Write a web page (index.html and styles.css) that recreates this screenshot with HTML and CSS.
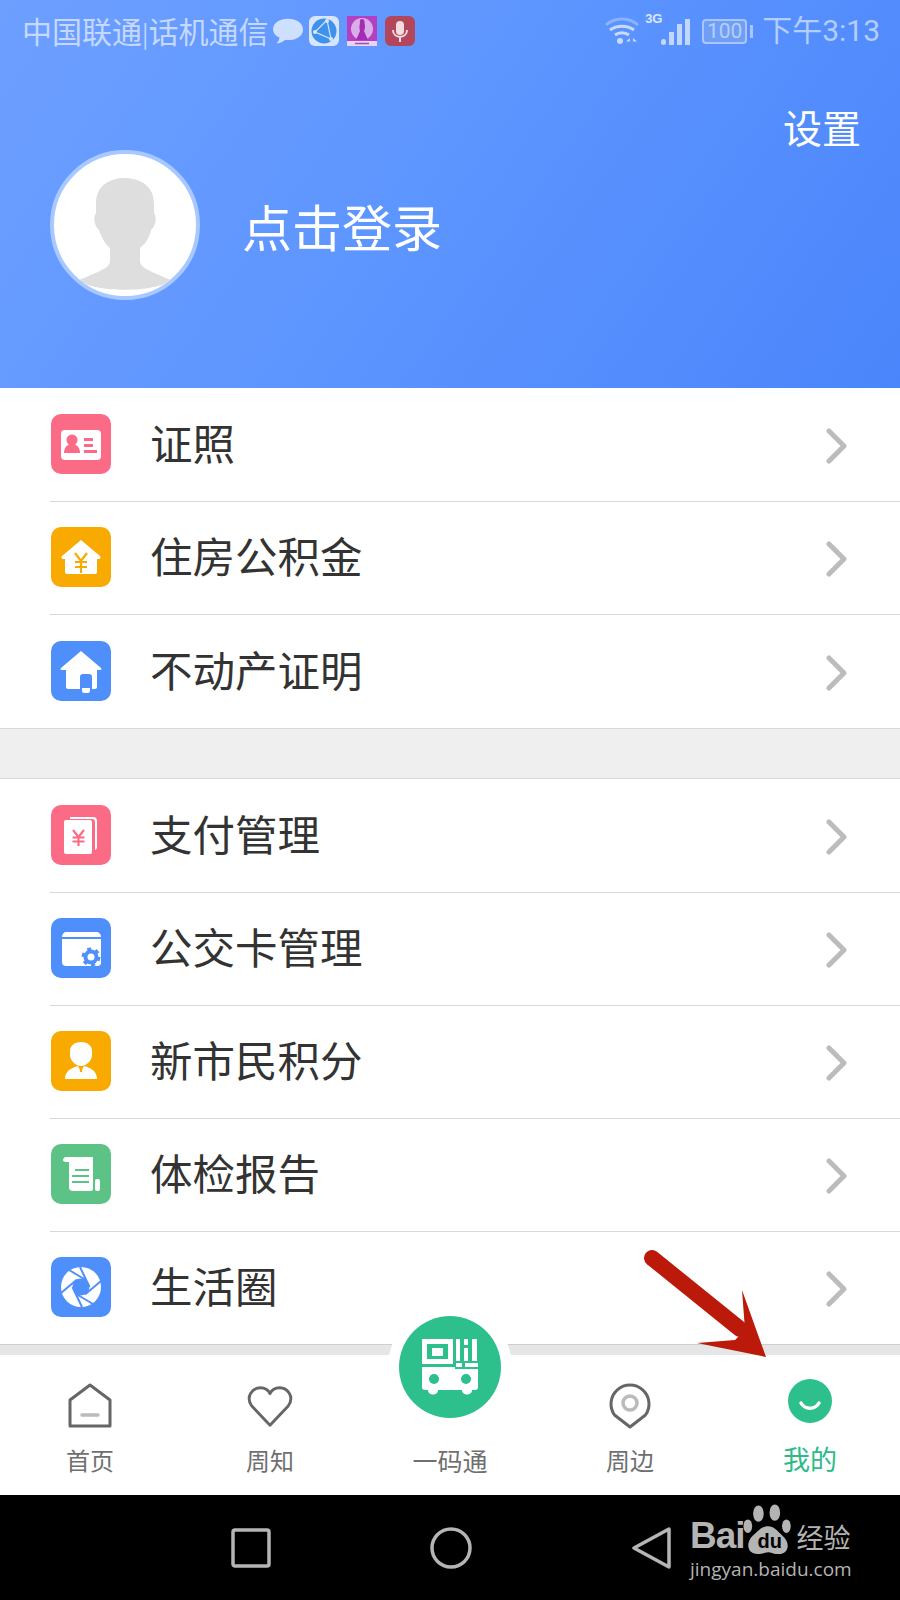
FILE: index.html
```html
<!DOCTYPE html>
<html lang="zh-CN">
<head>
  <meta charset="UTF-8" />
  <title>我的</title>
  <meta name="viewport" content="width=device-width, initial-scale=1" />
  <link rel="stylesheet" href="styles.css">
</head>
<body>
<div class="page">

  <header class="top">
    <div class="status">
      <div class="status-left">
        <span class="carrier">中国联通<i class="pipe">|</i>话机通信</span>
        <svg class="st-icon bubble" viewBox="1 3 28 25"><path d="M15 4c8 0 14 4 14 10s-6 10-14 10c-1 0-2 0-3-.2C10 26 7 27 4 27c2-1.500 3-3.500 3-5.500C3 19.800 1 17 1 14 1 8 7 4 15 4z"/></svg>
        <svg class="st-icon" viewBox="0 0 30 30"><rect width="30" height="30" rx="6" fill="#d7e5ff"/><circle cx="15" cy="15" r="12.500" fill="#3f92ea"/><path d="M18 4 6 16l16 7M18 4l4 19" fill="none" stroke="#d7e5ff" stroke-width="1.200"/><circle cx="6" cy="16" r="2" fill="#d7e5ff"/><circle cx="22" cy="23" r="2" fill="#d7e5ff"/><circle cx="18" cy="5" r="2" fill="#d7e5ff"/></svg>
        <svg class="st-icon" viewBox="0 0 30 30"><rect width="30" height="30" fill="#b43fc0"/><circle cx="15" cy="13" r="11" fill="#d9aee8"/><path d="M15 3c2 0 3 2 2.500 4 1 3 .5 6-.5 8l4 9H9l4-9c-1-3-.5-6 0-8-.5-2 0-4 2-4z" fill="#a52db5"/><rect y="25" width="30" height="5" fill="#e9d3ee"/><path d="M8 27.500h14" stroke="#a04fb0" stroke-width="1.500"/></svg>
        <svg class="st-icon" viewBox="0 0 30 30"><rect width="30" height="30" rx="6" fill="#b3455c"/><rect x="11" y="5" width="8" height="14" rx="4" fill="#f2dce0"/><path d="M8 14c0 9 14 9 14 0M15 20v6" fill="none" stroke="#f2dce0" stroke-width="2"/></svg>
      </div>
      <div class="status-right">
        <svg class="wifi" viewBox="0 0 34 28" fill="none" stroke="#c9dafc" stroke-width="3"><path d="M1 8c9-8 23-8 32 0" opacity=".45"/><path d="M5 13c7-5 17-5 24 0"/><path d="M10 18c4-3 10-3 14 0"/><circle cx="15" cy="24" r="3" fill="#c9dafc" stroke="none"/><path d="M25 21l-4 3.500h4zM28 21l4 3.500h-4z" fill="#c9dafc" stroke="none"/></svg>
        <div class="signal">
          <span class="net">3G</span>
          <svg viewBox="0 0 30 30" fill="#c3d6fb"><rect x="0" y="22" width="5" height="6" rx="2.500"/><rect x="8" y="15" width="5" height="13"/><rect x="16" y="7" width="5" height="21"/><rect x="24" y="2" width="5" height="26"/></svg>
        </div>
        <div class="battery">
          <div class="battery-box">100</div>
          <div class="battery-tip"></div>
        </div>
        <span class="time">下午3:13</span>
      </div>
    </div>
    <div class="settings">设置</div>
    <div class="profile">
      <div class="avatar">
        <svg viewBox="0 0 142 142"><path fill="#dedede" d="M71 24C56 24 42 31 42 50v9c-3 4-2 13 3 17 3 9 7 15 11 18v13c0 7-10 10-31 19 14 13 77 13 92 0-21-9-31-12-31-19V94c5-4 9-9 11-18 5-4 6-13 3-17v-9C100 36 92 25 71 24z"/></svg>
      </div>
      <div class="login">点击登录</div>
    </div>
  </header>

  <main class="list">
    <section class="group">
      <div class="row">
        <svg class="row-icon" viewBox="0 0 60 60"><rect width="60" height="60" rx="10" fill="#fb6b86"/><rect x="10" y="16" width="40" height="30" rx="4" fill="#fff"/><circle cx="21" cy="26" r="5.500" fill="#fb6b86"/><path d="M13 39c0-12 16-12 16 0z" fill="#fb6b86"/><path d="M33 24h9v3h-9zM33 30h9v3h-9zM33 36h13v3H33z" fill="#fb6b86"/></svg>
        <div class="row-body"><span class="row-label">证照</span><svg class="chev" viewBox="0 0 22 36"><path d="M3 3l15 15L3 33"/></svg></div>
      </div>
      <div class="row">
        <svg class="row-icon" viewBox="0 0 60 60"><rect width="60" height="60" rx="10" fill="#f8aa00"/><path d="M30 13l19 16c1 1 .5 3-1 3h-2v13c0 1.500-1 2-2 2H16c-1 0-2-.5-2-2V32h-2c-1.500 0-2-2-1-3z" fill="#fff"/><path d="M24 26l6 8 6-8M24 35h12M24 40h12M30 34v12" fill="none" stroke="#f8aa00" stroke-width="2.200"/></svg>
        <div class="row-body"><span class="row-label">住房公积金</span><svg class="chev" viewBox="0 0 22 36"><path d="M3 3l15 15L3 33"/></svg></div>
      </div>
      <div class="row">
        <svg class="row-icon" viewBox="0 0 60 60"><rect width="60" height="60" rx="10" fill="#4f8ffb"/><path d="M30 10l20 17c1 1 .5 2-1 2h-3v17c0 1-1 2-2 2H17c-1 0-2-1-2-2V29h-4c-1.500 0-2-1-1-2z" fill="#fff"/><rect x="29" y="33" width="12" height="20" rx="3" fill="#4f8ffb"/><path d="M31 47h8v3c0 1-1 2-2 2h-4c-1 0-2-1-2-2z" fill="#fff"/></svg>
        <div class="row-body"><span class="row-label">不动产证明</span><svg class="chev" viewBox="0 0 22 36"><path d="M3 3l15 15L3 33"/></svg></div>
      </div>
    </section>

    <div class="gap"></div>

    <section class="group group-second">
      <div class="row">
        <svg class="row-icon" viewBox="0 0 60 60"><rect width="60" height="60" rx="10" fill="#fb6b86"/><path d="M19 12h23c3 0 4 2 4 4v26c0 2-1 3-2 3V17c0-2-1-3-3-3H19z" fill="#fff"/><rect x="13" y="15" width="28" height="34" rx="2" fill="#fff"/><path d="M22 25l5.500 7 5.500-7M21.500 32.500h12M21.500 36.500h12M27.500 32v9" fill="none" stroke="#fb6b86" stroke-width="2.200"/></svg>
        <div class="row-body"><span class="row-label">支付管理</span><svg class="chev" viewBox="0 0 22 36"><path d="M3 3l15 15L3 33"/></svg></div>
      </div>
      <div class="row">
        <svg class="row-icon" viewBox="0 0 60 60"><rect width="60" height="60" rx="10" fill="#4f8ffb"/><path d="M15 14h30c3 0 5 2 5 5H11c0-3 2-5 4-5zM11 21h39v24c0 2-2 3-3 3H15c-2 0-4-1-4-4z" fill="#fff"/><circle cx="40" cy="39" r="7.500" fill="#4f8ffb"/><circle cx="40" cy="39" r="8" fill="none" stroke="#4f8ffb" stroke-width="3" stroke-dasharray="4 4.400"/><circle cx="40" cy="39" r="3.500" fill="#fff"/></svg>
        <div class="row-body"><span class="row-label">公交卡管理</span><svg class="chev" viewBox="0 0 22 36"><path d="M3 3l15 15L3 33"/></svg></div>
      </div>
      <div class="row">
        <svg class="row-icon" viewBox="0 0 60 60"><rect width="60" height="60" rx="10" fill="#f8aa00"/><path d="M30 11c7 0 11 4 11 9v4c0 6-6 11-11 11s-11-5-11-11v-4c0-5 4-9 11-9z" fill="#fff"/><path d="M14 48c0-8 6-11 13-13l2 4-1.500 9zM46 48c0-8-6-11-13-13l-2 4 1.500 9zM28.500 41h3l1 7h-5z" fill="#fff"/></svg>
        <div class="row-body"><span class="row-label">新市民积分</span><svg class="chev" viewBox="0 0 22 36"><path d="M3 3l15 15L3 33"/></svg></div>
      </div>
      <div class="row">
        <svg class="row-icon" viewBox="0 0 60 60"><rect width="60" height="60" rx="10" fill="#5cc286"/><path d="M15 13h27c-2 1-2 3-2 4v20H18V18h-3c-2 0-3-1-3-2s1-3 3-3z" fill="#fff"/><path d="M16 13h26v32c0 1-1 2-2 2H22c-2 0-4-1-4-3V18z" fill="#fff"/><path d="M24 26h14M21 32h17M21 38h17" stroke="#5cc286" stroke-width="2.200"/><rect x="44" y="35" width="5" height="12" rx="2" fill="#fff"/></svg>
        <div class="row-body"><span class="row-label">体检报告</span><svg class="chev" viewBox="0 0 22 36"><path d="M3 3l15 15L3 33"/></svg></div>
      </div>
      <div class="row">
        <svg class="row-icon" viewBox="0 0 60 60"><rect width="60" height="60" rx="10" fill="#4f8ffb"/><circle cx="30" cy="30" r="20" fill="#fff"/><circle cx="30" cy="30" r="8.500" fill="#4f8ffb"/><path d="M38.500 30L29 10M34 37.500L50 24M26 37.500L42 47M21.500 30L31 50M26 22.500L10 36M34 22.500L18 13" stroke="#4f8ffb" stroke-width="2"/></svg>
        <div class="row-body"><span class="row-label">生活圈</span><svg class="chev" viewBox="0 0 22 36"><path d="M3 3l15 15L3 33"/></svg></div>
      </div>
    </section>
    <div class="band"></div>
  </main>

  <nav class="tabs">
    <div class="tab">
      <svg class="tab-icon" viewBox="0 0 46 46" fill="none" stroke="#666" stroke-width="3" stroke-linejoin="round"><path d="M23 2L43 17v26H3V17z"/><path d="M15 32h16" stroke="#bbb" stroke-width="3.500" stroke-linecap="round"/></svg>
      <span>首页</span>
    </div>
    <div class="tab">
      <svg class="tab-icon" viewBox="0 0 48 46" fill="none" stroke="#666" stroke-width="3" stroke-linejoin="round"><path d="M24 43L5 23C-2 13 6 4 14 4c4 0 8 2 10 6 2-4 6-6 10-6 8 0 16 9 9 19z"/></svg>
      <span>周知</span>
    </div>
    <div class="tab tab-center">
      <div class="qr-halo">
        <svg class="qr-btn" viewBox="0 0 102 102"><circle cx="51" cy="51" r="51" fill="#2dc08c"/><path fill="none" stroke="#fff" stroke-width="5" d="M25.500 25.500h26v20h-26z"/><rect x="33" y="32" width="11" height="8" fill="#fff"/><path d="M57 23h4v22h-4zM65 23h4v6h-4zM65 32h4v13h-4zM73 23h5v22h-5zM57 47h6v4h-6zM66 47h13v4H66z" fill="#fff"/><path d="M23 51h33v2h23v18c0 2-1 3-3 3h-3c0 6-10 6-10 0H39c0 6-10 6-10 0h-3c-2 0-3-1-3-3z" fill="#fff"/><circle cx="35" cy="63" r="5" fill="#2dc08c"/><circle cx="67" cy="63" r="5" fill="#2dc08c"/></svg>
      </div>
      <span>一码通</span>
    </div>
    <div class="tab">
      <svg class="tab-icon" viewBox="0 0 46 46" fill="none" stroke="#666" stroke-width="3"><path d="M23 44L7.500 32A19 19 0 1 1 38.500 32z" stroke-linejoin="round"/><circle cx="23" cy="20" r="7" stroke="#bbb" stroke-width="3.500"/></svg>
      <span>周边</span>
    </div>
    <div class="tab tab-active">
      <svg class="tab-icon" viewBox="0 0 46 46"><circle cx="23" cy="22" r="22" fill="#2dc08c"/><path d="M14 24c4 7 14 7 18 0" fill="none" stroke="#fff" stroke-width="3.500" stroke-linecap="round"/></svg>
      <span>我的</span>
    </div>
  </nav>

  <footer class="navbar">
    <svg class="nav-btn" viewBox="0 0 40 42" fill="none" stroke="#b5b5b5" stroke-width="3.500"><rect x="2" y="3" width="36" height="36" rx="2"/></svg>
    <svg class="nav-btn nav-circle" viewBox="0 0 42 42" fill="none" stroke="#b5b5b5" stroke-width="3.500"><circle cx="21" cy="21" r="19"/></svg>
    <svg class="nav-btn nav-back" viewBox="0 0 40 42" fill="none" stroke="#b5b5b5" stroke-width="3.500" stroke-linejoin="round"><path d="M37 2v38L2 21z"/></svg>
  </footer>

  <div class="watermark">
    <div class="wm-logo">
      <span class="wm-bai">Bai</span>
      <div class="wm-paw">
        <svg viewBox="0 0 56 52" fill="#b4b4b4"><ellipse cx="16" cy="9" rx="5.500" ry="8.500"/><ellipse cx="33" cy="8" rx="5.500" ry="8.500"/><ellipse cx="5" cy="22" rx="4.500" ry="7"/><ellipse cx="45" cy="22" rx="4.500" ry="7"/><path d="M26 22c6 0 9 4 15 10 9 8 6 19-4 19-5 0-8-2-11-2s-6 2-11 2C5 51 2 40 10 32c6-5 9-10 16-10z"/></svg>
        <span class="wm-du">du</span>
      </div>
      <span class="wm-cn">经验</span>
    </div>
    <div class="wm-url">jingyan.baidu.com</div>
  </div>

  <svg class="arrow" viewBox="0 0 130 120"><path d="M12 13L100 84" stroke="#bb1a0b" stroke-width="16" stroke-linecap="round"/><path d="M126 112L102 45 105 85 95 95 57 98z" fill="#bb1a0b"/></svg>
</div>
</body>
</html>
```
FILE: styles.css
```css
* {
  box-sizing: border-box;
}
body {
  margin: 0;
  font-family: "Noto Sans CJK SC", "Noto Sans", sans-serif;
  color: #333;
  background: #fff;
}
.page {
  position: relative;
  width: 900px;
  height: 1600px;
  overflow: hidden;
  display: flex;
  flex-direction: column;
}

/* header */
.top {
  height: 388px;
  background: linear-gradient(125deg, #6d9fff 0%, #5e96ff 45%, #4a85fb 100%);
  color: #fff;
}
.status {
  height: 62px;
  padding: 0 20px 0 22px;
  display: flex;
  justify-content: space-between;
  align-items: center;
}
.status-left, .status-right {
  display: flex;
  align-items: center;
}
.carrier {
  font-size: 30px;
  line-height: 30px;
  color: #c5d8fd;
  white-space: nowrap;
  margin-right: 5px;
}
.pipe {
  font-style: normal;
  font-size: 24px;
}
.st-icon {
  width: 30px;
  height: 30px;
  margin-right: 8px;
}
.bubble {
  fill: #cfe0ff;
  margin-right: 6px;
}
.wifi {
  width: 34px;
  height: 28px;
  margin-right: 6px;
}
.signal {
  position: relative;
  width: 46px;
  height: 32px;
  margin-right: 11px;
}
.signal svg {
  position: absolute;
  right: 0;
  bottom: 0;
  width: 30px;
  height: 30px;
}
.net {
  position: absolute;
  left: 0;
  top: -4px;
  font-family: "Liberation Sans", sans-serif;
  font-size: 13px;
  font-weight: 700;
  color: #dbe7ff;
  line-height: 16px;
}
.battery {
  display: flex;
  align-items: center;
  margin-right: 9px;
}
.battery-box {
  width: 45px;
  height: 25px;
  border: 2px solid #a9c5fb;
  border-radius: 4px;
  font-family: Roboto, sans-serif;
  font-size: 21px;
  line-height: 21px;
  text-align: center;
  color: #b6cefc;
  background: #6f9ff5;
}
.battery-tip {
  width: 3px;
  height: 13px;
  margin-left: 3px;
  background: #a9c5fb;
}
.time {
  font-family: Roboto, "Noto Sans CJK SC", sans-serif;
  font-size: 30px;
  line-height: 30px;
  color: #b4cdfc;
  white-space: nowrap;
}
.settings {
  margin-top: 39px;
  padding-right: 39px;
  text-align: right;
  font-size: 39px;
  line-height: 50px;
}
.profile {
  margin-top: -1px;
  padding-left: 50px;
  display: flex;
  align-items: center;
}
.avatar {
  width: 150px;
  height: 150px;
  border: 4px solid #a9c8ff;
  border-radius: 50%;
  background: #fff;
  overflow: hidden;
}
.avatar svg {
  display: block;
  width: 142px;
  height: 142px;
}
.login {
  margin-left: 42px;
  font-size: 50px;
  line-height: 60px;
}

/* list */
.list {
  height: 967px;
  display: flex;
  flex-direction: column;
}
.group {
  background: #fff;
  padding-top: 1px;
  border-bottom: 1px solid #d9d9d9;
}
.group-second {
  border-top: 1px solid #d9d9d9;
  border-bottom: 0;
}
.gap {
  height: 49px;
  background: #efefef;
}
.row {
  height: 113px;
  margin-left: 50px;
  display: flex;
  align-items: center;
  border-bottom: 1px solid #d9d9d9;
}
.group > .row:last-child {
  border-bottom: 0;
}
.group-second > .row:last-child {
  height: 113px;
  border-bottom: 1px solid #cfcfcf;
  margin-left: 0;
  padding-left: 50px;
}
.row-icon {
  flex: none;
  width: 60px;
  height: 60px;
  margin: 0 0 2px 1px;
}
.row-body {
  flex: 1;
  display: flex;
  align-items: center;
  justify-content: space-between;
  margin-left: 39px;
  padding-right: 52px;
  font-size: 42.500px;
  line-height: 56px;
  color: #333;
}
.row-label {
  padding-bottom: 6px;
}
.chev {
  width: 22px;
  height: 36px;
  margin-top: 2px;
  fill: none;
  stroke: #bcbcbc;
  stroke-width: 5;
  stroke-linecap: round;
  stroke-linejoin: round;
}
.band {
  height: 10px;
  background: #e6e6e6;
}

/* bottom tabs */
.tabs {
  position: relative;
  height: 140px;
  background: #fff;
  display: grid;
  grid-template-columns: repeat(5, 180px);
}
.tab {
  padding-top: 28px;
  display: flex;
  flex-direction: column;
  align-items: center;
  font-size: 24px;
  line-height: 34px;
  color: #6f6f6f;
}
.tab-icon {
  display: block;
  width: 46px;
  height: 46px;
  margin-bottom: 14px;
}
.tab-center {
  padding-top: 88px;
  font-size: 25px;
}
.tab-active {
  padding-top: 24px;
  color: #2dbb8a;
  font-size: 27px;
}
.tab-active .tab-icon {
  margin-bottom: 17px;
}
.qr-halo {
  position: absolute;
  left: 388px;
  top: -50px;
  width: 124px;
  height: 124px;
  padding: 11px;
  border-radius: 50%;
  background: #fff;
}
.qr-btn {
  display: block;
  width: 102px;
  height: 102px;
}

/* android nav */
.navbar {
  flex: 1;
  background: #000;
  display: flex;
  align-items: center;
  padding: 0 0 0 231px;
}
.nav-btn {
  width: 40px;
  height: 42px;
}
.nav-circle {
  width: 42px;
  margin-left: 159px;
}
.nav-back {
  margin-left: 160px;
}

.watermark {
  position: absolute;
  left: 690px;
  top: 1504px;
  width: 170px;
  color: #b4b4b4;
  font-family: "Liberation Sans", sans-serif;
}
.wm-logo {
  display: flex;
  align-items: flex-end;
  height: 52px;
}
.wm-bai {
  font-size: 37px;
  font-weight: 700;
  line-height: 40px;
  letter-spacing: -1px;
}
.wm-paw {
  position: relative;
  width: 54px;
  height: 52px;
  margin-left: -2px;
}
.wm-paw svg {
  display: block;
  width: 54px;
  height: 52px;
}
.wm-du {
  position: absolute;
  left: 15px;
  top: 27px;
  font-size: 20px;
  font-weight: 700;
  line-height: 20px;
  color: #000;
}
.wm-cn {
  margin-left: 0;
  font-family: "Noto Sans CJK SC", sans-serif;
  font-size: 27px;
  line-height: 38px;
}
.wm-url {
  font-family: "Open Sans", sans-serif;
  font-size: 19px;
  line-height: 26px;
  white-space: nowrap;
}

/* red annotation arrow on top of the screenshot */
.arrow {
  position: absolute;
  left: 640px;
  top: 1245px;
  width: 130px;
  height: 120px;
}
```
